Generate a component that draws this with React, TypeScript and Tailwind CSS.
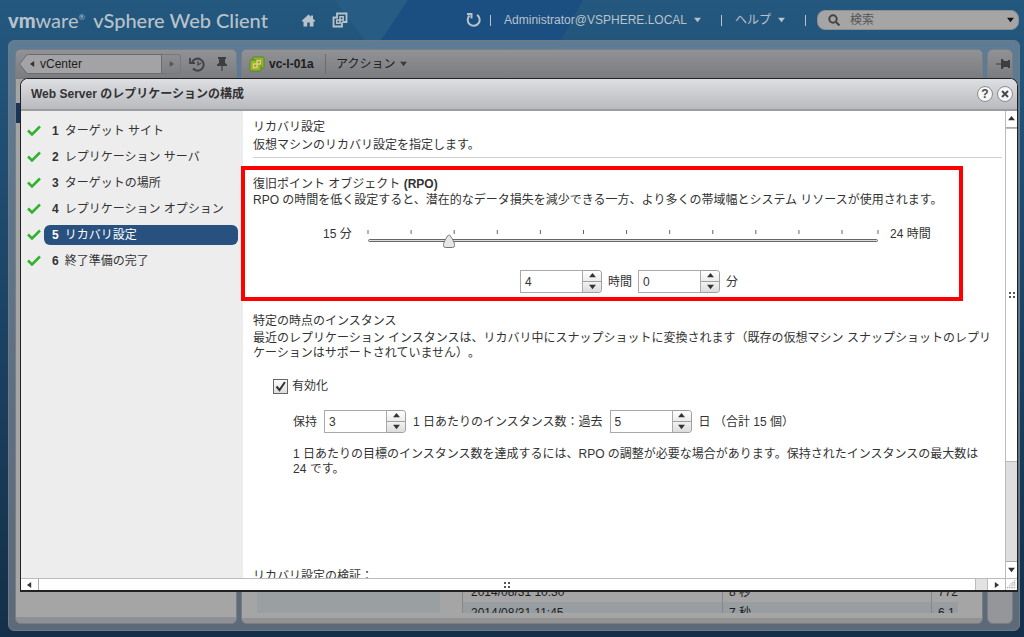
import { useState } from "react";
import type { ReactNode } from "react";

const steps = [
  "ターゲット サイト",
  "レプリケーション サーバ",
  "ターゲットの場所",
  "レプリケーション オプション",
  "リカバリ設定",
  "終了準備の完了",
];

const rows = [
  { time: "2014/08/31 10:30", duration: "8 秒", size: "772" },
  { time: "2014/08/31 11:45", duration: "7 秒", size: "6.1" },
];

const MIN_MINUTES = 15;
const MAX_MINUTES = 24 * 60;

type Dir = "up" | "down" | "left" | "right";

const arrows: Record<Dir, string> = {
  up: "M0 5 4 0 8 5z",
  down: "M0 1h8L4 6z",
  left: "M6 0v7L1 3.500z",
  right: "M2 0v7l5-3.500z",
};

function Arrow({ dir, className = "" }: { dir: Dir; className?: string }) {
  return (
    <svg className={`h-[6px] w-[7px] shrink-0 ${className}`} viewBox="0 0 8 7" fill="currentColor" aria-hidden="true">
      <path d={arrows[dir]} />
    </svg>
  );
}

function Check() {
  return (
    <svg className="h-3 w-[14px] shrink-0" viewBox="0 0 14 12" fill="none" aria-hidden="true">
      <path d="M1 5.500 5 9.500 13 1.500" stroke="#2fb32f" strokeWidth="2.500" />
    </svg>
  );
}

function Pin({ className = "" }: { className?: string }) {
  return (
    <svg className={`h-[14px] w-[14px] ${className}`} viewBox="0 0 14 14" fill="#3d3e40" aria-hidden="true">
      <path d="M3 0h8v2h-1v4l2 1.500V9H7.600v5H6.400V9H2V7.500L4 6V2H3z" />
    </svg>
  );
}

function VmSquares({ color, className = "" }: { color: string; className?: string }) {
  return (
    <svg className={className} viewBox="0 0 16 16" fill="none" stroke={color} strokeWidth="1.800" aria-hidden="true">
      <path d="M5 5.500V1.500h9.500V10h-4" />
      <path d="M6 5.500H1.500v9H10V10" />
      <path d="M8 4.800h3.200V8H8zM4.800 8H8v3.200H4.800z" strokeWidth="1.500" />
    </svg>
  );
}

function Backdrop() {
  return (
    <svg className="absolute left-0 top-0 h-[78px] w-[1024px]" viewBox="0 0 1024 78" aria-hidden="true">
      <path d="M408 0H583L540 78H355z" fill="#1b4f81" />
      <path d="M335 0h73l-35 52z" fill="#2a6088" opacity="0.600" />
    </svg>
  );
}

function Stepper({ label, value, onChange }: { label: string; value: number; onChange: (v: number) => void }) {
  return (
    <div className="flex h-[23px] w-[82px] text-[#333]">
      <input
        type="number"
        aria-label={label}
        value={value}
        onChange={(e) => onChange(Number(e.target.value))}
        className="min-w-0 flex-1 appearance-none border border-[#a9a9a9] bg-white px-1 text-xs outline-none [-moz-appearance:textfield] [&::-webkit-inner-spin-button]:appearance-none"
      />
      <div className="flex w-[19px] flex-col overflow-hidden rounded-r border border-l-0 border-[#a0a0a0]">
        <button
          type="button"
          aria-label={`${label} +`}
          onClick={() => onChange(value + 1)}
          className="flex flex-1 items-center justify-center border-b border-[#a0a0a0] bg-linear-to-b from-white to-[#ececec]"
        >
          <Arrow dir="up" />
        </button>
        <button
          type="button"
          aria-label={`${label} -`}
          onClick={() => onChange(Math.max(0, value - 1))}
          className="flex flex-1 items-center justify-center bg-linear-to-b from-[#f2f2f2] to-[#dcdcdc]"
        >
          <Arrow dir="down" />
        </button>
      </div>
    </div>
  );
}

function RpoSlider({ minutes, onChange }: { minutes: number; onChange: (v: number) => void }) {
  const pct = ((minutes - MIN_MINUTES) / (MAX_MINUTES - MIN_MINUTES)) * 100;
  return (
    <div className="relative h-6 flex-1">
      <svg className="block h-2 w-full overflow-visible" aria-hidden="true">
        {Array.from({ length: 13 }, (_, i) => {
          const x = i === 12 ? "100%" : `${i * 8.45}%`;
          return <line key={i} x1={x} x2={x} y1="4" y2="8" stroke="#666" />;
        })}
      </svg>
      <div className="mt-[5px] h-[3px] rounded-sm border border-[#666] bg-[#ddd]" />
      <svg
        className="absolute top-2 h-[14px] w-3 -translate-x-1/2"
        style={{ left: `${pct}%` }}
        viewBox="0 0 12 14"
        aria-hidden="true"
      >
        <path d="M6 .700C7 .700 11.500 8 11.500 10.500v1q0 2-2 2h-7q-2 0-2-2v-1C.500 8 5 .700 6 .700z" fill="#e6e6e6" stroke="#777" />
      </svg>
      <input
        type="range"
        aria-label="RPO"
        min={MIN_MINUTES}
        max={MAX_MINUTES}
        step={15}
        value={minutes}
        onChange={(e) => onChange(Number(e.target.value))}
        className="absolute inset-0 h-full w-full cursor-pointer opacity-0"
      />
    </div>
  );
}

function Grip() {
  return (
    <svg className="h-[6px] w-[6px]" viewBox="0 0 6 6" fill="#555" aria-hidden="true">
      <path d="M0 0h2v2H0zM4 0h2v2H4zM0 4h2v2H0zM4 4h2v2H4z" />
    </svg>
  );
}

function RoundButton({ label, children }: { label: string; children: ReactNode }) {
  return (
    <button
      type="button"
      aria-label={label}
      className="flex size-4 items-center justify-center rounded-full border border-[#8a8a8c] bg-[#f6f6f6] text-xs leading-none font-bold text-[#4a4a4a]"
    >
      {children}
    </button>
  );
}

function Header() {
  return (
    <header className="relative flex h-10 shrink-0 items-center pr-[5px] pl-2 text-[#b9c2ca]">
      <h1 className="flex w-[294px] items-baseline gap-2 whitespace-nowrap font-[Lato,sans-serif] text-[20px] leading-6">
        <span>
          <b className="font-black">vm</b>
          <span>ware</span>
          <sup className="text-[8px] -top-2">®</sup>
        </span>
        <span className="font-medium">vSphere Web Client</span>
      </h1>
      <nav className="flex items-center gap-[17px]">
        <a href="#home" aria-label="Home">
          <svg className="h-[13px] w-[13px]" viewBox="0 0 13 12" fill="currentColor" aria-hidden="true">
            <path d="M6.500 0 9 2.300V1h2v3.200L13 6v1h-1.500v5h-3.700V8H5.200v4H1.500V7H0V6z" />
          </svg>
        </a>
        <a href="#inventory" aria-label="Inventory">
          <VmSquares color="currentColor" className="size-4" />
        </a>
      </nav>
      <div className="ml-auto flex items-center text-xs">
        <button type="button" aria-label="Refresh">
          <svg className="size-4" viewBox="0 0 16 16" fill="none" stroke="currentColor" strokeWidth="2" aria-hidden="true">
            <path d="M11 2.800A6 6 0 1 1 3.500 3.500" />
            <path d="M1 2h4.500v4.500" />
          </svg>
        </button>
        <span className="ml-2 h-[11px] w-px bg-current" />
        <button type="button" className="ml-[13px] flex items-center gap-[7px]">
          Administrator@VSPHERE.LOCAL
          <Arrow dir="down" />
        </button>
        <span className="ml-5 h-[11px] w-px bg-current" />
        <button type="button" className="ml-[13px] flex items-center gap-[7px]">
          ヘルプ
          <Arrow dir="down" />
        </button>
        <span className="ml-5 h-[11px] w-px bg-current" />
        <label className="ml-[11px] flex h-[20px] w-[202px] items-center rounded-lg border border-[#8e8e8e] bg-[#a5a5a5] pr-1 pl-[10px]">
          <svg className="size-3 shrink-0" viewBox="0 0 12 12" fill="none" stroke="#454545" strokeWidth="2" aria-hidden="true">
            <circle cx="5" cy="5" r="3.700" />
            <path d="m8 8 3.500 3.500" />
          </svg>
          <input
            type="search"
            placeholder="検索"
            aria-label="検索"
            className="ml-[10px] min-w-0 flex-1 bg-transparent text-xs outline-none placeholder:text-[#555]"
          />
          <Arrow dir="down" className="text-[#111]" />
        </label>
      </div>
    </header>
  );
}

const panel = "flex flex-col overflow-hidden rounded-md border border-[#7b7d82]";
const panelBar = "flex h-[29px] shrink-0 items-center border-b border-[#77787b] bg-linear-to-b from-[#919296] to-[#7b7c80]";

function Workspace() {
  return (
    <div className="relative mr-1 mb-[6px] ml-2 flex flex-1 gap-1 overflow-hidden rounded-md border border-[#6f7a85] bg-linear-to-b from-[#658098]/90 to-[#5c6a79] pt-2 pr-[6px] pb-[6px] pl-[6px] text-xs text-[#1d1d1d]">
      <aside className={`${panel} w-[222px] bg-[#a5a5a5]`}>
        <div className={`${panelBar} pl-[3px]`}>
          <svg className="h-5 w-[10px] shrink-0" viewBox="0 0 10 20" aria-hidden="true">
            <path d="M10 .500H8L.500 10 8 19.500h2" fill="#a3a3a5" stroke="#6c6c6e" />
          </svg>
          <button type="button" className="flex h-5 w-[133px] items-center gap-1 border-y border-r border-[#6c6c6e] bg-[#a3a3a5]">
            <Arrow dir="left" className="text-[#333]" />
            vCenter
          </button>
          <button type="button" aria-label="Forward" className="flex h-5 w-[19px] items-center justify-center rounded-r border border-l-0 border-[#77787b] text-[#55565a]">
            <Arrow dir="right" />
          </button>
          <button type="button" aria-label="History" className="ml-2">
            <svg className="h-[15px] w-[17px]" viewBox="0 0 17 15" fill="none" stroke="#424346" strokeWidth="2" aria-hidden="true">
              <path d="M3 5.500A6 6 0 1 1 4 11.500" />
              <path d="M1 1v5h5" strokeWidth="1.800" />
              <path d="M9 4v4l3-2" strokeWidth="1.200" />
            </svg>
          </button>
          <button type="button" aria-label="Pin" className="ml-[9px]">
            <Pin />
          </button>
        </div>
        <div className="mt-6 h-5 bg-[#1b3559]" />
        <div className="mt-auto h-[6px] bg-[#8f9095]" />
      </aside>

      <main className={`${panel} min-w-0 flex-1 bg-[#a5a5a5]`}>
        <div className={`${panelBar} pl-[7px]`}>
          <svg className="size-4" viewBox="0 0 16 16" aria-hidden="true">
            <rect x="4" y="1" width="11" height="11" rx="1" fill="#8cb82e" stroke="#5c861d" />
            <rect x="1" y="4" width="11" height="11" rx="1" fill="#8cb82e" stroke="#5c861d" />
            <path d="M8 4.500h3.500V8H8zM4.500 8H8v3.500H4.500z" fill="#a88e34" stroke="#e0cf78" strokeWidth="1.500" />
          </svg>
          <b className="ml-1 w-[56px]">vc-l-01a</b>
          <button type="button" className="flex h-5 items-center gap-[5px] border-l border-[#6c6d70] pl-[10px]">
            アクション
            <Arrow dir="down" className="text-[#3a3a3a]" />
          </button>
        </div>
        <div className="flex flex-1 items-end gap-[22px] overflow-hidden pr-[24px] pl-[15px]">
          <div className="h-full w-[183px] shrink-0 bg-[#9a9fa1]" />
          <table className="-mb-[10px] flex-1 table-fixed border-collapse">
            <tbody>
              {rows.map((r) => (
                <tr key={r.time} className="h-[21px] even:bg-[#979da1]">
                  <td className="border-l border-[#858789] pl-2">{r.time}</td>
                  <td className="w-[209px] border-l border-[#858789] pl-[6px]">{r.duration}</td>
                  <td className="w-[24px] border-l border-[#858789] pl-[6px]">{r.size}</td>
                </tr>
              ))}
            </tbody>
          </table>
        </div>
        <div className="h-[10px] border-b-[5px] border-[#929292]" />
      </main>

      <aside className={`${panel} w-[26px] bg-[#95969a]`}>
        <div className={`${panelBar} justify-end pr-[2px]`}>
          <Pin className="rotate-90" />
        </div>
      </aside>
    </div>
  );
}

function Wizard() {
  const [step, setStep] = useState(4);
  return (
    <nav className="w-[222px] shrink-0 bg-[#ededed] pt-[10px] pr-[5px] pl-[6px] text-xs">
      <ol className="flex flex-col gap-[6px]">
        {steps.map((name, i) => (
          <li key={name} className="flex items-center gap-[3px]">
            <Check />
            <button
              type="button"
              onClick={() => setStep(i)}
              className={`flex h-5 flex-1 items-center gap-[6px] rounded-md pl-2 whitespace-nowrap ${
                i === step ? "bg-[#28517f] text-white" : "text-[#333]"
              }`}
            >
              <b>{i + 1}</b>
              {name}
            </button>
          </li>
        ))}
      </ol>
    </nav>
  );
}

function RecoverySettings() {
  const [minutes, setMinutes] = useState(240);
  const [enabled, setEnabled] = useState(true);
  const [keep, setKeep] = useState(3);
  const [days, setDays] = useState(5);

  const hours = Math.floor(minutes / 60);
  const rest = minutes % 60;

  const updateMinutes = (v: number) => setMinutes(Math.min(MAX_MINUTES, Math.max(MIN_MINUTES, v)));

  return (
    <div className="flex min-w-0 flex-1 flex-col bg-white text-xs leading-4 text-[#333]">
      <div className="mr-[3px] ml-[10px] border-b border-[#d0d0d0] pt-2 pb-1">
        <h3>リカバリ設定</h3>
        <p className="mt-[2px]">仮想マシンのリカバリ設定を指定します。</p>
      </div>

      {/* outlined block, its left edge reaches over the wizard column */}
      <section className="mt-2 mr-[42px] -ml-[2px] h-[135px] shrink-0 border-4 border-[#fe0000] pt-[6px] pl-2">
        <h3>
          復旧ポイント オブジェクト <b>(RPO)</b>
        </h3>
        <p className="whitespace-nowrap">
          RPO の時間を低く設定すると、潜在的なデータ損失を減少できる一方、より多くの帯域幅とシステム リソースが使用されます。
        </p>
        <div className="mt-[18px] flex items-start pr-[28px] pl-[70px]">
          <span className="w-[45px]">15 分</span>
          <RpoSlider minutes={minutes} onChange={updateMinutes} />
          <span className="ml-3 w-[41px]">24 時間</span>
        </div>
        <div className="mt-5 flex items-center gap-[6px] pl-[267px]">
          <Stepper label="時間" value={hours} onChange={(v) => updateMinutes(v * 60 + rest)} />
          <span>時間</span>
          <Stepper label="分" value={rest} onChange={(v) => updateMinutes(hours * 60 + v)} />
          <span>分</span>
        </div>
      </section>

      <section className="mt-3 pl-[10px]">
        <h3>特定の時点のインスタンス</h3>
        <p className="mt-[2px] pr-[6px] leading-[15px]">
          最近のレプリケーション インスタンスは、リカバリ中にスナップショットに変換されます（既存の仮想マシン スナップショットのレプリケーションはサポートされていません）。
        </p>
        <label className="mt-[17px] ml-5 flex w-fit items-center gap-1">
          <span className="relative size-[15px]">
            <input
              type="checkbox"
              checked={enabled}
              onChange={(e) => setEnabled(e.target.checked)}
              className="block size-[15px] appearance-none border border-[#666] bg-linear-to-b from-white to-[#ddd]"
            />
            {enabled && (
              <svg className="pointer-events-none absolute inset-0" viewBox="0 0 15 15" fill="none" aria-hidden="true">
                <path d="m3.500 7.500 3 3.500L12 3" stroke="#333" strokeWidth="2" />
              </svg>
            )}
          </span>
          有効化
        </label>
        <div className="mt-4 ml-10 flex items-center gap-[7px] whitespace-nowrap">
          <span>保持</span>
          <Stepper label="保持" value={keep} onChange={setKeep} />
          <span>1 日あたりのインスタンス数：過去</span>
          <Stepper label="過去" value={days} onChange={setDays} />
          <span>日 （合計 {keep * days} 個）</span>
        </div>
        <p className="mt-[14px] mr-3 ml-10 leading-[15px]">
          1 日あたりの目標のインスタンス数を達成するには、RPO の調整が必要な場合があります。保持されたインスタンスの最大数は 24 です。
        </p>
      </section>

      <h3 className="mt-[91px] shrink-0 pl-[10px]">リカバリ設定の検証：</h3>
    </div>
  );
}

function VerticalBar() {
  return (
    <div className="flex w-3 shrink-0 flex-col border-l border-[#bbb] bg-[#dedede] text-[#333]">
      <button type="button" aria-label="Scroll up" className="flex h-[17px] items-center justify-center border-b border-[#aaa] bg-white">
        <Arrow dir="up" />
      </button>
      <div className="flex h-[334px] items-center justify-center border-y border-[#bbb] bg-white">
        <Grip />
      </div>
      <button type="button" aria-label="Scroll down" className="mt-auto flex h-[17px] items-center justify-center border-t border-[#aaa] bg-white">
        <Arrow dir="down" />
      </button>
    </div>
  );
}

function HorizontalBar() {
  return (
    <div className="flex h-3 shrink-0 border-t border-[#bbb] bg-white text-[#333]">
      <button type="button" aria-label="Scroll left" className="flex w-[18px] items-center justify-center border-r border-[#aaa]">
        <Arrow dir="left" />
      </button>
      <div className="flex flex-1 items-center justify-center">
        <Grip />
      </div>
      <div className="w-[13px] border-x border-[#bbb] bg-[#e2e2e2]" />
      <button type="button" aria-label="Scroll right" className="flex w-[17px] items-center justify-center">
        <Arrow dir="right" />
      </button>
      <svg className="h-full w-3 border-l border-[#bbb]" viewBox="0 0 12 12" fill="#777" aria-hidden="true">
        <path d="M9 1h1v1H9zM7 3h1v1H7zM9 3h1v1H9zM5 5h1v1H5zM7 5h1v1H7zM9 5h1v1H9zM3 7h1v1H3zM5 7h1v1H5zM7 7h1v1H7zM9 7h1v1H9zM1 9h1v1H1zM3 9h1v1H3zM5 9h1v1H5zM7 9h1v1H7zM9 9h1v1H9z" />
      </svg>
    </div>
  );
}

function ReplicationDialog() {
  return (
    <div
      role="dialog"
      aria-labelledby="dialog-title"
      className="absolute top-[78px] right-[6px] bottom-[45px] left-5 flex flex-col overflow-hidden rounded-t-lg border border-b-2 border-[#222] bg-white"
    >
      <div className="flex h-8 shrink-0 items-center gap-1 border-b-2 border-[#9b9ca0] bg-linear-to-b from-[#dedfe3] to-[#b9babe] pr-1 pl-[10px] text-xs text-[#333]">
        <h2 id="dialog-title" className="mr-auto font-bold">
          Web Server のレプリケーションの構成
        </h2>
        <RoundButton label="Help">?</RoundButton>
        <RoundButton label="Close">
          <svg className="size-2" viewBox="0 0 8 8" stroke="currentColor" strokeWidth="2" aria-hidden="true">
            <path d="m1 1 6 6M7 1 1 7" />
          </svg>
        </RoundButton>
      </div>
      <div className="flex min-h-0 flex-1 overflow-hidden">
        <Wizard />
        <RecoverySettings />
        <VerticalBar />
      </div>
      <HorizontalBar />
    </div>
  );
}

export default function App() {
  return (
    <div
      lang="ja"
      className="relative flex h-screen flex-col overflow-hidden bg-linear-to-b from-[#24587f] to-[#142f49] font-['Liberation_Sans','Noto_Sans_CJK_JP',sans-serif] [text-spacing-trim:space-all]"
    >
      <Backdrop />
      <Header />
      <Workspace />
      <ReplicationDialog />
    </div>
  );
}
